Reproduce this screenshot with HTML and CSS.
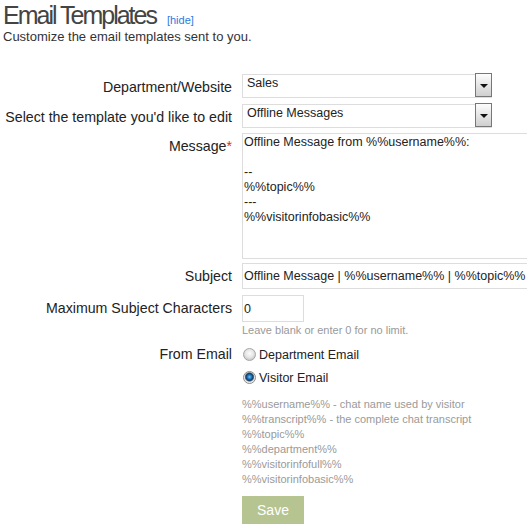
FILE: index.html
```html
<!DOCTYPE html>
<html lang="en">

<head>
  <meta charset="UTF-8">
  <meta name="viewport" content="width=device-width, initial-scale=1.0">
  <title>Email Templates</title>
  <link rel="stylesheet" href="styles.css">
</head>

<body>
  <div class="page">
    <h1 class="title">Email Templates <a href="#" class="hide-link">[hide]</a></h1>
    <p class="intro">Customize the email templates sent to you.</p>

    <form class="settings">
      <div class="row">
        <label class="row-label">Department/Website</label>
        <div class="field">
          <div class="select-box">
            <select>
              <option>Sales</option>
            </select>
            <span class="select-arrow"></span>
          </div>
        </div>
      </div>

      <div class="row">
        <label class="row-label">Select the template you'd like to edit</label>
        <div class="field">
          <div class="select-box">
            <select>
              <option>Offline Messages</option>
            </select>
            <span class="select-arrow"></span>
          </div>
        </div>
      </div>

      <div class="row row-message">
        <label class="row-label label-top">Message<span class="required">*</span></label>
        <div class="field">
          <textarea class="message-box">Offline Message from %%username%%:

--
%%topic%%
---
%%visitorinfobasic%%</textarea>
        </div>
      </div>

      <div class="row">
        <label class="row-label label-top">Subject</label>
        <div class="field">
          <input type="text" class="subject-input" value="Offline Message | %%username%% | %%topic%%">
        </div>
      </div>

      <div class="row">
        <label class="row-label label-top">Maximum Subject Characters</label>
        <div class="field">
          <input type="text" class="short-input" value="0">
          <div class="hint">Leave blank or enter 0 for no limit.</div>
        </div>
      </div>

      <div class="row row-radio">
        <label class="row-label">From Email</label>
        <div class="field">
          <label class="radio-line"><input type="radio" name="from"> Department Email</label>
          <label class="radio-line"><input type="radio" name="from" checked> Visitor Email</label>

          <div class="variables">
            %%username%% - chat name used by visitor<br>
            %%transcript%% - the complete chat transcript<br>
            %%topic%%<br>
            %%department%%<br>
            %%visitorinfofull%%<br>
            %%visitorinfobasic%%
          </div>

          <button type="button" class="save-button">Save</button>
        </div>
      </div>
    </form>
  </div>
</body>

</html>
```

FILE: styles.css
```css
body {
  margin: 0;
  font-family: "Liberation Sans", Arial, sans-serif;
  color: #222;
  background-color: #fff;
  overflow: hidden;
}

.page {
  padding: 0 3px;
}

.title {
  margin: 0;
  padding-top: 1px;
  font-size: 25px;
  font-weight: normal;
  letter-spacing: -2px;
  line-height: 28px;
  color: #444;
}

.hide-link {
  font-size: 11px;
  line-height: 11px;
  letter-spacing: 0;
  color: #2a7ae2;
  text-decoration: none;
  margin-left: 6px;
}

.intro {
  margin: 0;
  font-size: 13px;
  line-height: 15px;
  color: #333;
}

.settings {
  margin-top: 29px;
}

.row {
  display: grid;
  grid-template-columns: 229px 1fr;
  column-gap: 10px;
  align-items: start;
  margin-bottom: 6px;
}

.row-message {
  margin-bottom: 4px;
}

.row-label {
  text-align: right;
  font-size: 14.2px;
  line-height: 16px;
  padding-top: 6px;
  color: #222;
}

.label-top {
  padding-top: 5px;
}

.required {
  color: #e02a2a;
}

.field {
  min-width: 0;
}

/* select with old style dropdown button */
.select-box {
  position: relative;
  width: 250px;
  height: 24px;
}

.select-box select {
  appearance: none;
  -webkit-appearance: none;
  width: 100%;
  height: 24px;
  margin: 0;
  padding: 0 0 5px 4px;
  border: 1px solid #ddd;
  border-radius: 0;
  background-color: #fff;
  font-family: "Liberation Sans", Arial, sans-serif;
  font-size: 12.5px;
  color: #222;
}

.select-arrow {
  position: absolute;
  top: 0;
  right: 0;
  width: 15px;
  height: 22px;
  border: 1px solid #777;
  background: linear-gradient(#fdfdfd, #cfcfcf);
  pointer-events: none;
}

.select-arrow::after {
  content: "";
  position: absolute;
  left: 4px;
  top: 10px;
  border-left: 4px solid transparent;
  border-right: 4px solid transparent;
  border-top: 4px solid #111;
}

.message-box {
  display: block;
  box-sizing: border-box;
  width: 300px;
  height: 126px;
  margin: 0;
  padding: 1px 1px;
  border: 1px solid #ddd;
  resize: none;
  font-family: "Liberation Sans", Arial, sans-serif;
  font-size: 12.5px;
  line-height: 15px;
  color: #222;
}

.subject-input,
.short-input {
  display: block;
  box-sizing: border-box;
  margin: 0;
  padding: 0 0 0 1px;
  border: 1px solid #ddd;
  font-family: "Liberation Sans", Arial, sans-serif;
  font-size: 12.5px;
  color: #222;
}

.subject-input {
  width: 300px;
  height: 26px;
}

.short-input {
  width: 62px;
  height: 27px;
}

.hint {
  margin-top: 2px;
  font-size: 11px;
  line-height: 13px;
  color: #9a9a9a;
}

.row-radio .row-label {
  padding-top: 3px;
}

.radio-line {
  display: flex;
  align-items: center;
  height: 23px;
  font-size: 12.5px;
  color: #222;
}

.radio-line input {
  appearance: none;
  -webkit-appearance: none;
  width: 13px;
  height: 13px;
  margin: 0 3px 0 1px;
  border: 1px solid #a5a5a5;
  border-radius: 50%;
  background: radial-gradient(circle at 50% 40%, #fcfcfc 0, #e6e6e6 4px, #cfcfcf 6px);
}

.radio-line input:checked {
  border-color: #8c8c8c;
  background: radial-gradient(circle at 50% 45%, #7cc4f0 0, #1a78c2 2px, #123e6a 3.5px, #5a6a78 4.2px, #e4e4e4 5px, #f4f4f4 6px);
}

.variables {
  margin-top: 8px;
  font-size: 11px;
  line-height: 15px;
  color: #9a9a9a;
}

.save-button {
  display: block;
  margin-top: 9px;
  width: 62px;
  height: 28px;
  border: none;
  background-color: #b6c491;
  color: #fff;
  font-family: "Liberation Sans", Arial, sans-serif;
  font-size: 14px;
  cursor: pointer;
}
```
